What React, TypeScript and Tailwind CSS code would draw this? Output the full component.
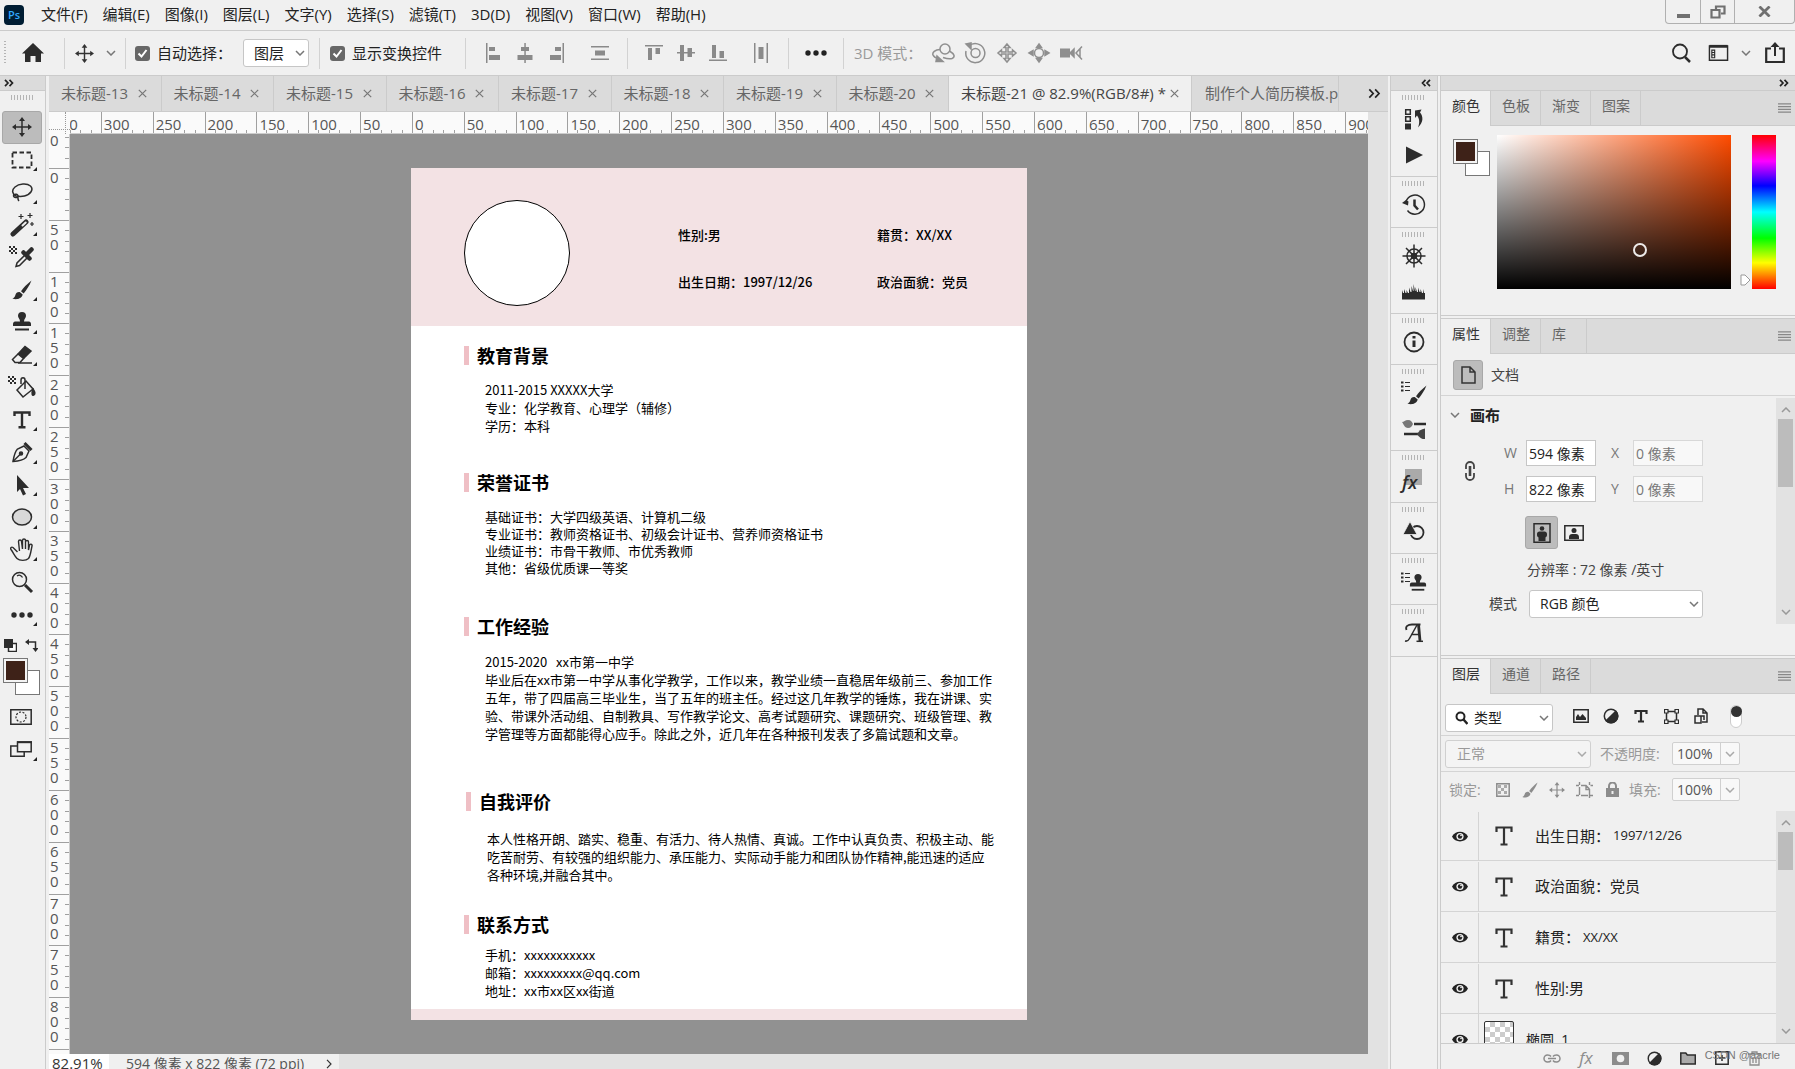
import React from "react";

type SvgProps = { w?: number; h?: number; vb?: string; children: React.ReactNode; className?: string };

function Svg({ w = 24, h = 24, vb = "0 0 24 24", children, className = "" }: SvgProps) {
  return (
    <svg width={w} height={h} viewBox={vb} fill="none" stroke="currentColor" strokeWidth={1.5} className={"shrink-0 " + className} aria-hidden="true">
      {children}
    </svg>
  );
}

const Chevron = ({ className = "" }: { className?: string }) => (
  <Svg w={10} h={6} vb="0 0 10 6" className={className}>
    <path d="M1 1l4 4 4-4" />
  </Svg>
);

const MoveIcon = ({ size = 20 }: { size?: number }) => (
  <Svg w={size} h={size} vb="0 0 20 20">
    <path d="M10 3v14M3 10h14" />
    <path d="M10 0l3 4H7zM10 20l3-4H7zM0 10l4-3v6zM20 10l-4-3v6z" fill="currentColor" stroke="none" />
  </Svg>
);

const Brush = ({ size = 20 }: { size?: number }) => (
  <Svg w={size} h={size} vb="0 0 20 20">
    <path d="M19.500 0.500C15 4 11.500 7.500 9 11.200l2.600 2.400C14.500 10 17.500 5.500 19.500 0.500z" fill="currentColor" stroke="none" />
    <path d="M8 12.200c-2.600-.4-4 .8-4.600 2.800-.5 1.800-1.300 2.900-3 3.600 3.600 1.400 9 .8 10.300-4z" fill="currentColor" stroke="none" />
  </Svg>
);

const Stamp = ({ size = 20 }: { size?: number }) => (
  <Svg w={size} h={size} vb="0 0 20 20">
    <path d="M10 0a4 4 0 0 1 4 4c0 2-2 2.600-2 5.500h5c1 0 2 1 2 2.500v2H1v-2c0-1.500 1-2.500 2-2.500h5C8 6.600 6 6 6 4a4 4 0 0 1 4-4z" fill="currentColor" stroke="none" />
    <path d="M3 17.500h14" strokeWidth={2} />
  </Svg>
);

const TextT = ({ size = 20 }: { size?: number }) => (
  <Svg w={size} h={size} vb="0 0 20 20">
    <path d="M2.500 6V2.500h15V6M10 3v14M6.500 17.300h7" strokeWidth={2.400} />
  </Svg>
);

const Contrast = ({ size = 16 }: { size?: number }) => (
  <Svg w={size} h={size} vb="0 0 16 16">
    <circle cx="8" cy="8" r="6.700" />
    <path d="M12.800 3.200a6.700 6.700 0 0 1-9.600 9.600z" fill="currentColor" />
  </Svg>
);

const Dots = () => (
  <Svg w={22} h={6} vb="0 0 22 6">
    <g fill="currentColor" stroke="none">
      <circle cx="3" cy="3" r="2.700" />
      <circle cx="11" cy="3" r="2.700" />
      <circle cx="19" cy="3" r="2.700" />
    </g>
  </Svg>
);

const Checker = () => (
  <g fill="currentColor" stroke="none">
    <path d="M0 1h2v2H0zM4 1h2v2H4zM2 3h2v2H2zM6 3h2v2H6zM0 5h2v2H0zM4 5h2v2H4zM2 7h2v2H2zM6 7h2v2H6z" />
  </g>
);

const tools: { name: string; icon: React.ReactNode; corner: boolean }[] = [
  { name: "移动工具", corner: false, icon: <MoveIcon /> },
  { name: "矩形选框工具", corner: true, icon: <Svg><path d="M2.500 4.500h19v15h-19z" strokeDasharray="4.500 2.500" strokeWidth={1.800} /></Svg> },
  { name: "套索工具", corner: true, icon: <Svg><path d="M6 16c-4-2-4.500-6-1-9 4-3.500 12-4 15.500-1 3.500 3.500 0 8.500-6 10-3 .7-6 .5-8.500 0z" /><path d="M8 16.500c.5-2.500-4-3-4.500-.8-.3 2 4.500 2.500 4.500.8 0 2-.5 3 1 4.500" /></Svg> },
  { name: "魔棒工具", corner: true, icon: <Svg><path d="M3 21L16 9" strokeWidth={5} strokeLinecap="round" /><path d="M12.500 12.500l3.200-3" stroke="#f0f0f0" strokeWidth={2} strokeLinecap="round" /><path d="M11 1v5M8.500 3.500h5M20 0v5M17.500 2.500h5M22 9v4M20 11h4" strokeWidth={1.200} /></Svg> },
  { name: "吸管工具", corner: false, icon: <Svg w={26} h={24} vb="0 0 26 24"><Checker /><path d="M7 21.500l1-3.500 9-9 2.500 2.500-9 9L7 21.500z" /><path d="M14.500 7.500l6 6M17 10l5.500-5.500" strokeWidth={4.500} strokeLinecap="round" /></Svg> },
  { name: "画笔工具", corner: true, icon: <Brush /> },
  { name: "仿制图章工具", corner: true, icon: <Stamp /> },
  { name: "橡皮擦工具", corner: true, icon: <Svg><path d="M2.500 16.500L8 11l5.500 4.500-3.500 4H5z" /><path d="M8.500 10.500L15 3.500l6 4.500-7 7z" fill="currentColor" /><path d="M8 20h14" /></Svg> },
  { name: "油漆桶工具", corner: false, icon: <Svg w={28} h={24} vb="0 0 28 24"><Checker /><path d="M9 15l9-9 7 8-10 8z" /><path d="M17 14V5c0-3-4-3-4 0v4" /><path d="M25 14c2 3 2.500 5 1 6s-3-1-1-6z" fill="currentColor" /></Svg> },
  { name: "文字工具", corner: true, icon: <TextT /> },
  { name: "钢笔工具", corner: true, icon: <Svg><path d="M3 21.500c1-6 2-10 4.500-12.500L14 6l5 5-3 6.500c-2.500 2.500-6.500 3.500-13 4z" /><path d="M3 21.500l7.500-7.500" /><circle cx="11" cy="13.500" r="1.500" fill="currentColor" /><path d="M14.500 3l7 7" strokeWidth={3} /></Svg> },
  { name: "路径选择工具", corner: true, icon: <Svg><path d="M7 2l12 13h-6l3 6-3 1.500-3-6.500-3 3z" fill="currentColor" stroke="none" /></Svg> },
  { name: "椭圆工具", corner: true, icon: <Svg><ellipse cx="12" cy="12" rx="9.500" ry="8" fill="#d9d9d9" /></Svg> },
  { name: "抓手工具", corner: true, icon: <Svg><path d="M7.500 14L3 9.500c-1.500-1-3 .5-2 2 2.500 3.500 4 7 6 9 2.500 2.500 9 2.500 11.500 0 2-2.500 2.500-8 3.500-12.500.5-2-2-2.500-2.500-.8L18.500 12V4c0-2-3-2-3 0v7V2.500c0-2-3-2-3 0V11L11.500 3.500c0-2-3-2-3 0L9.500 13" strokeWidth={1.400} /></Svg> },
  { name: "缩放工具", corner: false, icon: <Svg><circle cx="9.500" cy="9.500" r="7" /><path d="M7 6c2-1.500 4.500-.8 5.500 1.500" strokeWidth={1.200} /><path d="M15 15l7 7" strokeWidth={3} /></Svg> },
  { name: "编辑工具栏", corner: true, icon: <Dots /> },
];

const menus = ["文件(F)", "编辑(E)", "图像(I)", "图层(L)", "文字(Y)", "选择(S)", "滤镜(T)", "3D(D)", "视图(V)", "窗口(W)", "帮助(H)"];

function Grip() {
  return <div className="mx-auto h-[5px] w-6 shrink-0 bg-[repeating-linear-gradient(90deg,#b4b4b4_0px,#b4b4b4_1px,transparent_1px,transparent_3px)]" />;
}

function MenuBar() {
  return (
    <header className="flex h-[31px] shrink-0 items-start border-b border-[#cbcbcb]">
      <div className="mt-[5px] ml-1 flex h-5 w-5 shrink-0 items-center justify-center rounded bg-[#001d33] text-[11px] font-semibold text-[#31a8ff]">Ps</div>
      <nav className="ml-[17px] flex h-[29px] items-center gap-[15px] text-[15px] text-[#222]">
        {menus.map((m) => (
          <button key={m} type="button" className="whitespace-nowrap">{m}</button>
        ))}
      </nav>
      <div className="ml-auto flex h-[24px] w-[130px] shrink-0 rounded-b border border-t-0 border-[#b0b0b0] text-[#707070]">
        <button type="button" aria-label="最小化" className="flex w-[35px] items-center justify-center border-r border-[#b0b0b0]">
          <Svg w={13} h={14} vb="0 0 13 14"><path d="M0 11h13" strokeWidth={4} /></Svg>
        </button>
        <button type="button" aria-label="还原" className="flex w-[34px] items-center justify-center border-r border-[#b0b0b0]">
          <Svg w={16} h={14} vb="0 0 16 14"><path d="M6 4V1.500h8.500v7H11M1.500 5h8v7.500h-8z" strokeWidth={2.200} /></Svg>
        </button>
        <button type="button" aria-label="关闭" className="flex flex-1 items-center justify-center">
          <Svg w={13} h={11} vb="0 0 14 12"><path d="M1.500 0.500l11 11M12.500 0.500l-11 11" strokeWidth={3} /></Svg>
        </button>
      </div>
    </header>
  );
}

const Sep = ({ className = "" }: { className?: string }) => <div className={"h-[31px] w-px shrink-0 bg-[#d2d2d2] " + className} />;

function Check({ id, label, className = "" }: { id: string; label: string; className?: string }) {
  return (
    <div className={"flex shrink-0 items-center " + className}>
      <span className="relative flex h-[15px] w-[15px]">
        <input id={id} type="checkbox" defaultChecked className="h-[15px] w-[15px] appearance-none rounded-[3px] bg-[#676767]" />
        <Svg w={15} h={15} vb="0 0 15 15" className="pointer-events-none absolute inset-0 text-white"><path d="M3.500 7.500l3 3 5-6.500" strokeWidth={2} /></Svg>
      </span>
      <label htmlFor={id} className="ml-[7px] text-[15px] whitespace-nowrap text-[#222]">{label}</label>
    </div>
  );
}

function IconBtn({ name, className = "", children }: { name: string; className?: string; children: React.ReactNode }) {
  return (
    <button type="button" aria-label={name} className={"flex shrink-0 items-center justify-center " + className}>{children}</button>
  );
}

const hAlign = [
  { n: "左对齐", d: "M2 0h1.500v20H2zM5 4h6v4H5zM5 12h11v5H5z" },
  { n: "水平居中", d: "M8.300 0h1.500v20H8.300zM5 4h8v4H5zM1.500 12h15v5h-15z" },
  { n: "右对齐", d: "M14.500 0H16v20h-1.500zM7 4h6v4H7zM2 12h11v5H2z" },
];
const vAlign = [
  { n: "顶对齐", d: "M0 2h18v1.500H0zM3 5h4v12H3zM10.500 5h4.500v6h-4.500z" },
  { n: "垂直居中", d: "M0 9h18v1.500H0zM3 2h4v16H3zM10.500 5h4.500v9h-4.500z" },
  { n: "底对齐", d: "M0 16.500h18V18H0zM3 2h4v13H3zM10.500 8h4.500v7h-4.500z" },
];

const Shape = ({ d }: { d: string }) => (
  <Svg w={18} h={20} vb="0 0 18 20"><path d={d} fill="currentColor" stroke="none" /></Svg>
);

function OptionsBar() {
  return (
    <div className="flex h-[45px] shrink-0 items-center border-b border-[#cbcbcb] pr-[10px]">
      <div className="ml-1 h-6 w-0.5 shrink-0 bg-[repeating-linear-gradient(#b4b4b4_0px,#b4b4b4_1px,transparent_1px,transparent_3px)]" />
      <IconBtn name="主页" className="ml-4 w-[22px] text-[#2c2c2c]">
        <Svg w={22} h={20} vb="0 0 22 20"><path d="M11 0l11 10.500h-3V19h-5.500v-6h-5v6H3v-8.500H0z" fill="currentColor" stroke="none" /></Svg>
      </IconBtn>
      <Sep className="ml-5" />
      <IconBtn name="移动" className="ml-[10px] text-[#333]"><MoveIcon size={19} /></IconBtn>
      <Chevron className="ml-3 text-[#777]" />
      <Sep className="ml-[9px]" />
      <Check id="auto" label="自动选择：" className="ml-[9px] w-[108px]" />
      <div className="relative flex shrink-0 items-center">
        <select aria-label="自动选择对象" className="h-[28px] w-[66px] appearance-none rounded-[3px] border border-[#c6c6c6] bg-white pl-[10px] text-[15px] text-[#222]"><option>图层</option></select>
        <Chevron className="pointer-events-none absolute right-[4px] text-[#777]" />
      </div>
      <Sep className="ml-[10px]" />
      <Check id="transform" label="显示变换控件" className="ml-[10px] w-[125px]" />
      <Sep className="ml-[10px]" />
      <div className="ml-[18px] flex gap-[14px] text-[#8a8a8a]">
        {hAlign.map((a) => <IconBtn key={a.n} name={a.n}><Shape d={a.d} /></IconBtn>)}
      </div>
      <IconBtn name="水平分布" className="ml-[25px] text-[#8a8a8a]"><Shape d="M0 3h18v1.500H0zM4 7.500h10v5H4zM0 15.500h18V17H0z" /></IconBtn>
      <Sep className="ml-[18px]" />
      <div className="ml-[17px] flex gap-[14px] text-[#8a8a8a]">
        {vAlign.map((a) => <IconBtn key={a.n} name={a.n}><Shape d={a.d} /></IconBtn>)}
      </div>
      <IconBtn name="垂直分布" className="ml-[25px] text-[#8a8a8a]"><Shape d="M2 0h1.500v20H2zM6.500 4h5v12h-5zM14.500 0H16v20h-1.500z" /></IconBtn>
      <Sep className="ml-[18px]" />
      <IconBtn name="更多" className="ml-[16px] text-[#222]"><Dots /></IconBtn>
      <Sep className="ml-4" />
      <span className="ml-[10px] w-[77px] shrink-0 text-[15px] whitespace-nowrap text-[#9a9a9a]">3D 模式：</span>
      <div className="flex items-center gap-2 text-[#8f8f8f]">
        <IconBtn name="旋转 3D 对象"><Svg w={24} h={24}><circle cx="14" cy="8" r="5" /><path d="M9 8.500c-5 0-8 3-7 5.500s3 3 5 3.500M18.500 10c5 3 6 6 2.500 7.500-3 1-6 0-9-1" /><path d="M6 15l6 5.500H5z" fill="currentColor" /></Svg></IconBtn>
        <IconBtn name="滚动 3D 对象"><Svg w={24} h={24}><circle cx="12.500" cy="12" r="4.500" /><path d="M6 5a9.500 9.500 0 1 1-3 5" /><path d="M3 3l5-1 0 6z" fill="currentColor" /></Svg></IconBtn>
        <IconBtn name="拖动 3D 对象"><Svg w={24} h={24}><path d="M12 3l3 3.500h-2V11h4.500V9l3.500 3-3.500 3v-2H13v4.500h2L12 21l-3-3.500h2V13H6.500v2L3 12l3.500-3v2H11V6.500H9z" /></Svg></IconBtn>
        <IconBtn name="滑动 3D 对象"><Svg w={24} h={24}><circle cx="12" cy="12" r="4.500" /><path d="M12 3l2.500 3.500h-5zM12 21l2.500-3.500h-5zM2 12l4-2.500v5zM22 12l-4-2.500v5z" fill="currentColor" /></Svg></IconBtn>
        <IconBtn name="缩放 3D 对象"><Svg w={24} h={24}><path d="M1 7.500h10v9H1z" fill="currentColor" stroke="none" /><path d="M11 12l4-4v8z" fill="currentColor" /><path d="M23 5.500L17 12l6 6.500M21 8v8" /></Svg></IconBtn>
      </div>
      <div className="ml-auto flex shrink-0 items-center text-[#2c2c2c]">
        <IconBtn name="搜索"><Svg w={20} h={20} vb="0 0 20 20"><circle cx="9" cy="8.500" r="7" strokeWidth={1.800} /><path d="M14 14l5 5" strokeWidth={2.500} /></Svg></IconBtn>
        <IconBtn name="工作区" className="ml-[17px]"><Svg w={21} h={18} vb="0 0 22 18"><path d="M1.500 1.500h19v15h-19z" /><path d="M1.500 2h19" strokeWidth={3} /><path d="M4 6h3v8H4zM4 8.500h3M4 11h3" strokeWidth={1.200} /></Svg></IconBtn>
        <Chevron className="ml-3 text-[#777]" />
        <IconBtn name="共享" className="ml-[14px]"><Svg w={20} h={22} vb="0 0 20 22"><path d="M6 6.500H1.200V20h17.600V6.500H14" strokeWidth={2.200} /><path d="M10 14V4" strokeWidth={2} /><path d="M10 0l4.500 5h-9z" fill="currentColor" stroke="none" /></Svg></IconBtn>
      </div>
    </div>
  );
}

const DoubleArrow = ({ flip = false, big = false }: { flip?: boolean; big?: boolean }) => (
  <Svg w={big ? 13 : 10} h={big ? 11 : 8} vb="0 0 10 8" className={flip ? "rotate-180 text-[#222]" : "text-[#222]"}>
    <path d="M1 0.800L4 4 1 7.200M5.500 0.800L8.500 4l-3 3.200" strokeWidth={big ? 1.300 : 1.700} />
  </Svg>
);

function Swatches() {
  return (
    <div className="relative h-[37px] w-[37px] shrink-0">
      <div className="absolute right-0 bottom-0 h-[25px] w-[25px] border border-[#777] bg-white" />
      <div className="absolute top-0 left-0 h-[25px] w-[25px] border border-[#777] bg-[#3e2218] shadow-[inset_0_0_0_2px_#f4f4f4]" />
    </div>
  );
}

const Corner = () => <span className="absolute right-1 bottom-1 h-0 w-0 border-b-4 border-l-4 border-b-[#222] border-l-transparent" />;

function Toolbar() {
  return (
    <aside className="flex w-[46px] shrink-0 flex-col border-r border-[#cbcbcb]">
      <div className="flex h-[15px] shrink-0 items-center border-b border-[#cbcbcb] bg-[#dbdbdb] pl-1"><DoubleArrow /></div>
      <div className="h-5 shrink-0 pt-1"><Grip /></div>
      <div className="mr-[3px] ml-[2px] grid h-[520px] shrink-0 auto-rows-fr text-[#2c2c2c]">
        {tools.map((t, i) => (
          <button key={t.name} type="button" aria-label={t.name} className={"relative flex items-center justify-center rounded-[3px] border " + (i === 0 ? "border-[#a8a8a8] bg-[#bcbcbc]" : "border-transparent")}>
            {t.icon}
            {t.corner && <Corner />}
          </button>
        ))}
      </div>
      <div className="mt-2 flex shrink-0 items-center justify-between pr-[7px] pl-1 text-[#2c2c2c]">
        <Svg w={13} h={13} vb="0 0 13 13"><path d="M4.500 4.500h8v8h-8z" fill="#fff" /><path d="M0 0h9v9H0z" fill="currentColor" stroke="none" /></Svg>
        <Svg w={13} h={13} vb="0 0 13 13"><path d="M3 3h7.500v8" /><path d="M0 3l4-3v6zM10.500 13l3-4h-6z" fill="currentColor" stroke="none" /></Svg>
      </div>
      <div className="mt-[6px] ml-[3px]"><Swatches /></div>
      <div className="mr-[3px] mt-[6px] flex flex-col items-center text-[#2c2c2c]">
        <IconBtn name="快速蒙版" className="h-8"><Svg w={22} h={16} vb="0 0 22 16"><path d="M.8.8h20.400v14.400H.8z" /><circle cx="11" cy="8" r="5" strokeDasharray="2 1.500" strokeWidth={1.200} /></Svg></IconBtn>
        <button type="button" aria-label="屏幕模式" className="relative flex h-8 w-[40px] items-center justify-center">
          <Svg w={22} h={16} vb="0 0 22 16"><path d="M7 5H.8v10.200h13.400V11" /><path d="M7.500 1h13.700v9.700H7.500z" /><path d="M7 1.200h15" strokeWidth={2} /></Svg>
          <Corner />
        </button>
      </div>
    </aside>
  );
}

const docTabs = ["未标题-13", "未标题-14", "未标题-15", "未标题-16", "未标题-17", "未标题-18", "未标题-19", "未标题-20"];

const CloseX = ({ name }: { name: string }) => (
  <button type="button" aria-label={"关闭 " + name} className="shrink-0 text-[#777]">
    <Svg w={9} h={9} vb="0 0 9 9"><path d="M.8.8l7.400 7.400M8.200.8L.8 8.200" strokeWidth={1.200} /></Svg>
  </button>
);

function DocTabs() {
  return (
    <div className="flex h-[36px] shrink-0 border-b border-[#cbcbcb] bg-[#dbdbdb] text-[15px] text-[#666]">
      <div className="grid w-[900px] shrink-0 grid-cols-8">
        {docTabs.map((t) => (
          <div key={t} className="flex items-center gap-[10px] border-r border-[#cbcbcb] pl-3 whitespace-nowrap">
            <button type="button">{t}</button>
            <CloseX name={t} />
          </div>
        ))}
      </div>
      <div className="flex w-[243px] shrink-0 items-center justify-between border-r border-[#cbcbcb] bg-[#f0f0f0] px-3 whitespace-nowrap text-[#444]">
        <button type="button">未标题-21 @ 82.9%(RGB/8#) *</button>
        <CloseX name="未标题-21" />
      </div>
      <div className="flex min-w-0 flex-1 items-center border-r border-[#cbcbcb] pl-[13px]">
        <button type="button" className="overflow-hidden whitespace-nowrap">制作个人简历模板.psd</button>
      </div>
      <IconBtn name="更多文档" className="w-[49px] pl-[22px]"><DoubleArrow big /></IconBtn>
    </div>
  );
}

const hMarks = Array.from({ length: 26 }, (_, i) => Math.abs((i - 7) * 50));
const vMarks = Array.from({ length: 19 }, (_, i) => Math.abs((i - 1) * 50));

function HRuler() {
  return (
    <div className="h-[22px] min-w-0 flex-1 overflow-hidden border-b border-[#ccc] bg-[#fafafa]">
      <div className="-ml-[21px] grid h-full w-[1348px] grid-cols-[repeat(26,1fr)]">
        {hMarks.map((m, i) => (
          <div key={i} className="flex flex-col justify-between border-l border-[#a0a0a0] pl-0.5">
            <span className="h-[17px] text-[15px] leading-[24px] text-[#555]">{m}</span>
            <span className="-ml-[3px] h-[3px] bg-[repeating-linear-gradient(90deg,#a0a0a0_0px,#a0a0a0_1px,transparent_1px,transparent_20%)]" />
          </div>
        ))}
      </div>
    </div>
  );
}

function VRuler() {
  return (
    <div className="w-[21px] shrink-0 overflow-hidden border-r border-[#ccc] bg-[#fafafa]">
      <div className="-mt-[18px] grid h-[985px] grid-rows-[repeat(19,1fr)]">
        {vMarks.map((m, i) => (
          <div key={i} className="flex min-h-0 justify-between border-t border-[#a0a0a0]">
            <span className="flex flex-col pt-px pl-px text-[15px] leading-[15px] text-[#555]">
              {String(m).split("").map((c, k) => <span key={k}>{c}</span>)}
            </span>
            <span className="-mt-px w-1 bg-[repeating-linear-gradient(180deg,#a0a0a0_0px,#a0a0a0_1px,transparent_1px,transparent_20%)]" />
          </div>
        ))}
      </div>
    </div>
  );
}

function Section({ title, lines, className, bodyClass }: { title: string; lines: string[]; className: string; bodyClass: string }) {
  return (
    <section className={className}>
      <div className="flex h-[19px] items-center gap-2">
        <div className="h-full w-[5px] bg-[#efbfc5]" />
        <h2 className="text-lg leading-[19px] font-bold">{title}</h2>
      </div>
      <div className={"pl-[21px] text-[13px] whitespace-nowrap " + bodyClass}>
        {lines.map((l) => <p key={l} className="whitespace-pre">{l}</p>)}
      </div>
    </section>
  );
}

function Resume() {
  return (
    <article className="mx-auto mt-[34px] flex h-[852px] w-[616px] flex-col bg-white font-['Noto_Sans_CJK_SC',sans-serif] text-black">
      <div className="flex h-[158px] shrink-0 bg-[#f3e2e4] pl-[53px]">
        <div className="mt-8 h-[106px] w-[106px] rounded-full border border-black bg-white" />
        <div className="mt-[57px] ml-[108px] grid h-[67px] grid-cols-[199px_auto] content-between text-[13px] leading-5 font-medium">
          <span>性别:男</span>
          <span>籍贯：XX/XX</span>
          <span>出生日期：1997/12/26</span>
          <span>政治面貌：党员</span>
        </div>
      </div>
      <div className="flex-1 pl-[53px]">
        <Section title="教育背景" className="mt-[20px]" bodyClass="mt-4 leading-[18px]" lines={["2011-2015 XXXXX大学", "专业：化学教育、心理学（辅修）", "学历：本科"]} />
        <Section title="荣誉证书" className="mt-[38px]" bodyClass="mt-4 leading-[17px]" lines={["基础证书：大学四级英语、计算机二级", "专业证书：教师资格证书、初级会计证书、营养师资格证书", "业绩证书：市骨干教师、市优秀教师", "其他：省级优质课一等奖"]} />
        <Section
          title="工作经验"
          className="mt-[41px]"
          bodyClass="mt-[17px] leading-[18px]"
          lines={[
            "2015-2020   xx市第一中学",
            "毕业后在xx市第一中学从事化学教学，工作以来，教学业绩一直稳居年级前三、参加工作",
            "五年，带了四届高三毕业生，当了五年的班主任。经过这几年教学的锤炼，我在讲课、实",
            "验、带课外活动组、自制教具、写作教学论文、高考试题研究、课题研究、班级管理、教",
            "学管理等方面都能得心应手。除此之外，近几年在各种报刊发表了多篇试题和文章。",
          ]}
        />
        <Section
          title="自我评价"
          className="mt-[49px] ml-[2px]"
          bodyClass="mt-[19px] leading-[18px]"
          lines={[
            "本人性格开朗、踏实、稳重、有活力、待人热情、真诚。工作中认真负责、积极主动、能",
            "吃苦耐劳、有较强的组织能力、承压能力、实际动手能力和团队协作精神,能迅速的适应",
            "各种环境,并融合其中。",
          ]}
        />
        <Section title="联系方式" className="mt-[31px]" bodyClass="mt-3 leading-[18px]" lines={["手机：xxxxxxxxxxx", "邮箱：xxxxxxxxx@qq.com", "地址：xx市xx区xx街道"]} />
      </div>
      <div className="h-[11px] shrink-0 bg-[#f3e2e4]" />
    </article>
  );
}

function Workspace() {
  return (
    <main className="ml-[3px] flex min-w-0 flex-1 flex-col">
      <DocTabs />
      <div className="flex min-h-0 flex-1">
        <div className="flex min-w-0 flex-1 flex-col">
          <div className="flex shrink-0">
            <div className="relative h-[22px] w-[21px] shrink-0 bg-[#fafafa]">
              <div className="absolute inset-x-0 bottom-1 border-t border-dotted border-[#999]" />
              <div className="absolute inset-y-0 right-1 border-l border-dotted border-[#999]" />
            </div>
            <HRuler />
          </div>
          <div className="flex min-h-0 flex-1">
            <VRuler />
            <div className="min-w-0 flex-1 overflow-hidden bg-[#919191]"><Resume /></div>
          </div>
        </div>
        <div className="w-5 shrink-0 bg-[#e2e2e2]" />
      </div>
      <footer className="flex h-[15px] shrink-0 bg-[#e2e2e2] text-[15px] leading-[19px] text-[#333]">
        <input aria-label="缩放比例" defaultValue="82.91%" className="h-[19px] w-[60px] bg-white pl-[3px]" />
        <div className="flex w-[230px] items-start bg-[#f0f0f0] pl-[17px] whitespace-nowrap">
          <span className="w-[200px] text-[14px] text-[#555]">594 像素 x 822 像素 (72 ppi)</span>
          <Svg w={6} h={10} vb="0 0 6 10" className="mt-[5px]"><path d="M1 .8L5 5 1 9.200" strokeWidth={1.200} /></Svg>
        </div>
      </footer>
    </main>
  );
}

function ListLines() {
  return (
    <Svg w={10} h={12} vb="0 0 10 12"><path d="M0 1.500h2.500M0 5.500h2.500M0 9.500h2.500" strokeWidth={2.200} /><path d="M4 1.500h5M4 5.500h5M4 9.500h5" strokeWidth={1.200} /></Svg>
  );
}

const dockGroups: { h: string; items: { n: string; icon: React.ReactNode }[] }[] = [
  {
    h: "h-[86px]",
    items: [
      { n: "历史记录画板", icon: <Svg w={20} h={22} vb="0 0 20 22"><path d="M1.700 1.700h4.600v4.600H1.700zM1.700 8.700h4.600v4.600H1.700z" /><path d="M1 15.500h6V21.500H1z" fill="currentColor" stroke="none" /><path d="M11 2.500l6.500-1-1.500 3c3.500 4 3.500 10-2 15 2-5 1.500-9-1-12L11 10z" fill="currentColor" stroke="none" /></Svg> },
      { n: "动作", icon: <Svg w={18} h={18} vb="0 0 18 18"><path d="M1 0.500l17 8.500-17 8.500z" fill="currentColor" stroke="none" /></Svg> },
    ],
  },
  { h: "h-[51px]", items: [{ n: "历史记录", icon: <Svg><path d="M4 8.500a9.500 9.500 0 1 1 1.500 9" strokeWidth={1.500} /><path d="M0 10l4-3 2.500 1.500-.500 4z" fill="currentColor" stroke="none" /><path d="M12.500 6.500v6l3.500 4" strokeWidth={2.500} /></Svg> }] },
  {
    h: "h-[86px]",
    items: [
      { n: "导航器", icon: <Svg><circle cx="12" cy="12" r="7" /><circle cx="12" cy="12" r="2.500" fill="currentColor" /><path d="M12 .5v23M.5 12h23M4 4l16 16M20 4L4 20" /></Svg> },
      { n: "直方图", icon: <Svg w={24} h={16} vb="0 0 24 16"><path d="M0 15.500V6l1 3h1V5l1.500 4h1V6l1.500 3h1V3.500L8.500 8h1V2l1.500 5h.5V0l1.500 7h.5V3l1.500 5h1V3.500L17.500 8h1V5l1.500 4h1V5l1 4h1V6v9.500z" fill="currentColor" stroke="none" /></Svg> },
    ],
  },
  { h: "h-[51px]", items: [{ n: "信息", icon: <Svg><circle cx="12" cy="12" r="9.500" strokeWidth={1.800} /><path d="M12 10.500V17" strokeWidth={3} /><path d="M12 6v2.500" strokeWidth={3} /></Svg> }] },
  {
    h: "h-[86px]",
    items: [
      { n: "画笔设置", icon: <div className="flex items-start"><ListLines /><div className="-ml-1 pt-1"><Brush size={20} /></div></div> },
      { n: "画笔", icon: <Svg w={26} h={20} vb="0 0 26 20"><path d="M13 5h12M3 15h14" strokeWidth={2.500} /><path d="M1 3c2 0 3-2 6-2s4 2 5 4c-1 2-2 4-5 4S3 6 1 3z" fill="#777" stroke="none" /><path d="M16 15c2-3 4-5 8-5.500v11c-4-.5-6-2.500-8-5.500z" fill="#444" stroke="none" /></Svg> },
    ],
  },
  {
    h: "h-[52px]",
    items: [{ n: "样式", icon: <span className="relative flex h-[26px] w-6 items-end"><span className="absolute top-[3px] right-1 h-4 w-[17px] bg-[#aaa]" /><span className="relative font-['Open_Sans'] text-[18px] leading-5 font-semibold italic">fx</span></span> }],
  },
  { h: "h-[51px]", items: [{ n: "形状", icon: <Svg w={22} h={20} vb="0 0 22 20"><circle cx="14" cy="11.500" r="6.500" strokeWidth={1.800} /><path d="M7 .5l7 13H0z" fill="currentColor" stroke="#f0f0f0" strokeWidth={0.800} /></Svg> }] },
  { h: "h-[51px]", items: [{ n: "仿制源", icon: <div className="flex items-start"><ListLines /><div className="-ml-0.5 pt-0.5"><Stamp size={18} /></div></div> }] },
  { h: "h-[52px]", items: [{ n: "字形", icon: <Svg w={20} h={20} vb="0 0 20 20"><path d="M2.500 7C1 3.500 4 1.500 8 1.500h8.500" strokeWidth={1.800} /><path d="M14.500 1.500L16 18" strokeWidth={2.800} /><path d="M13 2L5.500 15.500C4.500 17.500 3 18.500 1 18M7 11.500h8" /><path d="M12.500 18.300H19" /></Svg> }] },
];

function Dock() {
  return (
    <aside className="ml-[2px] flex w-[48px] shrink-0 flex-col border-x border-[#cbcbcb]">
      <div className="flex h-[15px] shrink-0 items-center justify-end border-b border-[#cbcbcb] bg-[#dbdbdb] pr-[6px]"><DoubleArrow flip /></div>
      {dockGroups.map((g) => (
        <div key={g.items[0].n} className={"flex shrink-0 flex-col border-b border-[#cbcbcb] pt-1 " + g.h}>
          <Grip />
          <div className="flex flex-col pt-px">
            {g.items.map((it) => (
              <IconBtn key={it.n} name={it.n} className="h-9 text-[#2c2c2c]">{it.icon}</IconBtn>
            ))}
          </div>
        </div>
      ))}
    </aside>
  );
}

function PanelTabs({ tabs }: { tabs: string[] }) {
  return (
    <div className="flex h-[35px] shrink-0 bg-[#dbdbdb] text-sm text-[#666]">
      {tabs.map((t, i) => (
        <button key={t} type="button" className={"border-r border-[#cbcbcb] pb-[5px] pl-[11px] text-left " + (t.length === 1 ? "w-[46px] " : "w-[50px] ") + (i === 0 ? "bg-[#f0f0f0] text-[#333]" : "border-b")}>{t}</button>
      ))}
      <div className="flex flex-1 items-center justify-end border-b border-[#cbcbcb] pr-1 text-[#888]">
        <IconBtn name="面板菜单"><Svg w={13} h={10} vb="0 0 13 10"><path d="M0 .8h13M0 3.600h13M0 6.400h13M0 9.200h13" strokeWidth={1.200} /></Svg></IconBtn>
      </div>
    </div>
  );
}

function ColorPanel() {
  return (
    <section className="flex h-[225px] shrink-0 flex-col border-b border-[#cbcbcb]">
      <PanelTabs tabs={["颜色", "色板", "渐变", "图案"]} />
      <div className="flex pt-[9px] pl-3">
        <div className="pt-1"><Swatches /></div>
        <div className="relative ml-[7px] h-[154px] w-[234px] bg-[linear-gradient(to_top,#000,transparent),linear-gradient(to_right,#fff,#ff4b00)]">
          <div className="absolute top-[108px] left-[136px] h-[14px] w-[14px] rounded-full border-2 border-white/90" />
        </div>
        <Svg w={11} h={12} vb="0 0 11 12" className="mt-[139px] ml-[9px] text-[#999]"><path d="M1 1h4l5 5-5 5H1z" fill="#fff" strokeLinejoin="round" strokeWidth={1} /></Svg>
        <div className="ml-px h-[154px] w-6 bg-[linear-gradient(to_bottom,#f00,#f0f_17%,#00f_33%,#0ff_50%,#0f0_67%,#ff0_83%,#f00)]" />
      </div>
    </section>
  );
}

function Scroll({ thumb }: { thumb: string }) {
  return (
    <div className="flex w-[19px] shrink-0 flex-col items-center justify-between bg-[#e2e2e2] py-[9px] text-[#999]">
      <div className="flex w-full flex-col items-center">
        <Chevron className="rotate-180" />
        <div className={"mt-[6px] w-[15px] bg-[#bcbcbc] " + thumb} />
      </div>
      <Chevron />
    </div>
  );
}

function Field({ id, label, value, off = false }: { id: string; label: string; value: string; off?: boolean }) {
  return (
    <div className="flex items-center text-sm">
      <label htmlFor={id} className="w-[22px] text-[#777]">{label}</label>
      <input id={id} disabled={off} defaultValue={value} className={"h-[26px] w-[70px] border px-[2px] " + (off ? "border-[#d8d8d8] bg-[#f8f8f8] text-[#777]" : "border-[#c6c6c6] bg-white text-[#222]")} />
    </div>
  );
}

function PropertiesPanel() {
  return (
    <section className="mt-[2px] flex h-[338px] shrink-0 flex-col border-y border-[#cbcbcb]">
      <PanelTabs tabs={["属性", "调整", "库"]} />
      <div className="flex h-[42px] shrink-0 items-center border-b border-[#d4d4d4] pl-3">
        <div className="flex h-[30px] w-[30px] items-center justify-center rounded-[3px] border border-[#a8a8a8] bg-[#bcbcbc] text-[#333]">
          <Svg w={15} h={18} vb="0 0 15 18"><path d="M1 1h8l5 5v11H1zM9 1v5h5" /></Svg>
        </div>
        <span className="ml-2 text-sm text-[#444]">文档</span>
      </div>
      <div className="flex min-h-0 flex-1 pt-[2px] pb-[31px]">
        <div className="flex-1 pt-[7px] pl-[9px]">
          <button type="button" className="flex items-center text-[15px] leading-5 font-bold text-[#222]">
            <Chevron className="mr-[10px] text-[#777]" />画布
          </button>
          <div className="mt-[15px] flex items-center pl-[14px]">
            <Svg w={12} h={20} vb="0 0 12 20" className="text-[#444]"><path d="M2 8V5a4 4 0 0 1 8 0v3M2 12v3a4 4 0 0 0 8 0v-3" strokeWidth={1.800} /><path d="M6 5v10" strokeWidth={2.600} /></Svg>
            <div className="ml-[28px] grid grid-cols-[107px_auto] gap-y-[10px]">
              <Field id="pw" label="W" value="594 像素" />
              <Field id="px" label="X" value="0 像素" off />
              <Field id="ph" label="H" value="822 像素" />
              <Field id="py" label="Y" value="0 像素" off />
            </div>
          </div>
          <div className="mt-[14px] flex items-center gap-[6px] pl-[75px] text-[#2c2c2c]">
            <IconBtn name="纵向" className="h-[33px] w-[33px] rounded-[3px] border border-[#a8a8a8] bg-[#bcbcbc]">
              <Svg w={18} h={20} vb="0 0 18 20"><path d="M1 .8h16v18.400H1z" /><circle cx="9" cy="5.500" r="2.300" fill="currentColor" stroke="none" /><path d="M4 12v-1c0-1.500 1-2.500 2.500-2.500h5c1.500 0 2.500 1 2.500 2.500v1c0 1.500-1 2-1.500 2.500V18h-7v-3.500C5 14 4 13.500 4 12z" fill="currentColor" stroke="none" /></Svg>
            </IconBtn>
            <IconBtn name="横向"><Svg w={20} h={16} vb="0 0 20 16"><path d="M.8.8h18.400v14.400H.8z" /><circle cx="10" cy="5.500" r="2.500" fill="currentColor" stroke="none" /><path d="M5 14v-2c0-2 1.500-3 3-3h4c1.500 0 3 1 3 3v2z" fill="currentColor" stroke="none" /></Svg></IconBtn>
          </div>
          <p className="mt-[11px] pl-[77px] text-sm leading-5 text-[#444]">分辨率 : 72 像素 /英寸</p>
          <div className="mt-[10px] flex items-center pl-[39px] text-sm text-[#444]">
            <label htmlFor="mode" className="w-10">模式</label>
            <div className="relative flex items-center">
              <select id="mode" className="h-[28px] w-[174px] appearance-none rounded-[3px] border border-[#c6c6c6] bg-white pl-[10px] text-[#222]"><option>RGB 颜色</option></select>
              <Chevron className="pointer-events-none absolute right-1 text-[#777]" />
            </div>
          </div>
        </div>
        <Scroll thumb="h-[68px]" />
      </div>
    </section>
  );
}

function Percent({ id, label }: { id: string; label: string }) {
  return (
    <>
      <label htmlFor={id} className="shrink-0 text-sm whitespace-nowrap text-[#999]">{label}</label>
      <div className="ml-auto flex h-[23px] w-[68px] shrink-0 rounded-[2px] border border-[#d0d0d0] bg-[#f8f8f8]">
        <input id={id} defaultValue="100%" className="w-[48px] min-w-0 border-r border-[#d0d0d0] pl-1 text-sm text-[#555]" />
        <span className="flex flex-1 items-center justify-center text-[#aaa]"><Chevron /></span>
      </div>
    </>
  );
}

const layers = [
  { cjk: "出生日期：", latin: "1997/12/26" },
  { cjk: "政治面貌：党员", latin: "" },
  { cjk: "籍贯：", latin: "XX/XX" },
  { cjk: "性别:男", latin: "" },
];

const Eye = () => (
  <Svg w={16} h={11} vb="0 0 16 11"><path d="M0 5.500C3-1 13-1 16 5.500 13 12 3 12 0 5.500z" fill="currentColor" stroke="none" /><circle cx="8" cy="5.500" r="3.600" fill="#f0f0f0" stroke="none" /><circle cx="8" cy="5.500" r="2.200" fill="currentColor" stroke="none" /><circle cx="9" cy="4.500" r="0.800" fill="#fff" stroke="none" /></Svg>
);

const BigT = () => (
  <Svg w={18} h={20} vb="0 0 18 20"><path d="M1.500 6V1.500h15V6M9 2v16.500M5.500 18.500h7" strokeWidth={2.200} /></Svg>
);

function LayersPanel() {
  return (
    <section className="mt-[2px] flex min-h-0 flex-1 flex-col border-t border-[#cbcbcb]">
      <PanelTabs tabs={["图层", "通道", "路径"]} />
      <div className="flex h-[42px] shrink-0 items-center border-b border-[#d4d4d4] pt-[6px] pl-1">
        <div className="relative flex items-center">
          <select aria-label="图层过滤" className="h-[28px] w-[108px] appearance-none rounded-[3px] border border-[#c6c6c6] bg-white pl-[28px] text-sm text-[#222]"><option>类型</option></select>
          <Svg w={13} h={14} vb="0 0 13 14" className="pointer-events-none absolute left-[10px] text-[#222]"><circle cx="5.500" cy="5.500" r="4" strokeWidth={2} /><path d="M8.500 8.500l4 4.500" strokeWidth={2.500} /></Svg>
          <Chevron className="pointer-events-none absolute right-1 text-[#777]" />
        </div>
        <div className="-mt-[3px] ml-5 flex items-center gap-[14px] text-[#2c2c2c]">
          <IconBtn name="像素图层" className="w-4"><Svg w={16} h={14} vb="0 0 16 14"><path d="M.8.800h14.400v12.400H.8z" /><path d="M3 11V8l2-3 2 3 2.500-3L13 9v2z" fill="currentColor" stroke="none" /></Svg></IconBtn>
          <IconBtn name="调整图层" className="w-4"><Contrast /></IconBtn>
          <IconBtn name="文字图层" className="w-4"><Svg w={14} h={14} vb="0 0 14 14"><path d="M1.500 5V2h11v3M7 2v10M4 12.500h6" strokeWidth={2.200} /></Svg></IconBtn>
          <IconBtn name="形状图层" className="w-4"><Svg w={15} h={15} vb="0 0 15 15"><path d="M2.500 2.500h10v10h-10z" /><path d="M0.500 0.500h3.500v3.500H0.500zM11 .5h3.500v3.500H11zM.5 11h3.500v3.500H.5zM11 11h3.500v3.500H11z" fill="#f0f0f0" strokeWidth={1.200} /></Svg></IconBtn>
          <IconBtn name="智能对象" className="w-4"><Svg w={14} h={16} vb="0 0 14 16"><path d="M4 7V1h5l4 4v9H8M9 1v4h4" /><path d="M1 8h6v7H1zM7 8h3v4" /></Svg></IconBtn>
          <button type="button" aria-label="过滤开关" className="ml-[7px] flex h-[23px] w-3 justify-center rounded-full border border-[#ccc] bg-white">
            <span className="h-[11px] w-[11px] shrink-0 rounded-full bg-[#333]" />
          </button>
        </div>
      </div>
      <div className="flex h-[36px] shrink-0 items-center border-b border-[#d4d4d4] pr-[55px] pl-1">
        <div className="relative mr-[9px] flex items-center">
          <select aria-label="混合模式" className="h-[28px] w-[146px] appearance-none rounded-[3px] border border-[#d0d0d0] bg-[#f4f4f4] pl-[11px] text-sm text-[#999]"><option>正常</option></select>
          <Chevron className="pointer-events-none absolute right-1 text-[#aaa]" />
        </div>
        <Percent id="opacity" label="不透明度:" />
      </div>
      <div className="flex h-[35px] shrink-0 items-center pr-[55px] pl-2 text-[#8c8c8c]">
        <span className="w-[46px] shrink-0 text-sm text-[#999]">锁定:</span>
        <div className="mr-[9px] flex items-center gap-[11px]">
          <IconBtn name="锁定透明像素" className="w-4"><Svg w={14} h={14} vb="0 0 14 14"><path d="M.8.800h12.400v12.400H.8z" /><path d="M2 2h3v3H2zM8 2h3v3H8zM5 5h3v3H5zM2 8h3v3H2zM8 8h3v3H8z" fill="currentColor" stroke="none" opacity=".7" /></Svg></IconBtn>
          <IconBtn name="锁定图像像素" className="w-4"><Brush size={16} /></IconBtn>
          <IconBtn name="锁定位置" className="w-4"><MoveIcon size={16} /></IconBtn>
          <IconBtn name="锁定画板" className="w-[17px]"><Svg w={17} h={16} vb="0 0 17 16"><path d="M3.500 0v3M3.500 5v8M5 13.500h7M14 13.500h3M13.500 0v3M13.500 7v9M0 3.500h3M5 3.500h5l3.500 3.500M10 3.500v4h3.500M14.500 3.500H17M0 13.500h3" strokeWidth={1.400} /></Svg></IconBtn>
          <IconBtn name="全部锁定" className="w-4"><Svg w={13} h={15} vb="0 0 13 15"><path d="M0 6h13v9H0z" fill="currentColor" stroke="none" /><path d="M3 7V4a3.500 3.500 0 0 1 7 0v3" strokeWidth={2} /><path d="M6.500 9v3" stroke="#f0f0f0" strokeWidth={2} /></Svg></IconBtn>
        </div>
        <Percent id="fill" label="填充:" />
      </div>
      <div className="mt-1 flex min-h-0 flex-1">
        <ul className="min-w-0 flex-1 overflow-hidden text-[15px] text-[#222]">
          {layers.map((l, i) => (
            <li key={l.cjk} className={"flex items-center border-b border-[#d4d4d4] pt-px " + (i === 0 ? "h-[50px]" : "h-[51px]")}>
              <button type="button" aria-label="显示或隐藏" className="flex h-full w-[38px] shrink-0 items-center justify-center border-r border-[#d4d4d4]"><Eye /></button>
              <span className="flex w-[56px] shrink-0 pl-4 text-[#333]"><BigT /></span>
              <span className="flex items-center whitespace-nowrap">{l.cjk}{l.latin && <span className="ml-[3px] text-[13px]">{l.latin}</span>}</span>
            </li>
          ))}
          <li className="flex h-[51px] items-center">
            <button type="button" aria-label="显示或隐藏" className="flex h-full w-[38px] shrink-0 items-center justify-center border-r border-[#d4d4d4]"><Eye /></button>
            <span className="ml-[5px] h-[38px] w-[30px] rounded-[2px] border border-[#333] bg-[repeating-conic-gradient(#ccc_0%_25%,#fff_0%_50%)] bg-[length:10px_10px]" />
            <span className="ml-3 text-sm whitespace-nowrap">椭圆&nbsp; 1</span>
          </li>
        </ul>
        <Scroll thumb="h-[38px]" />
      </div>
      <div className="relative flex h-[26px] shrink-0 items-center justify-end gap-[16px] border-t border-[#cbcbcb] pt-[3px] pr-[34px] text-[#8c8c8c]">
        <IconBtn name="链接图层" className="w-[18px]"><Svg w={18} h={9} vb="0 0 18 9"><path d="M8 6.500C7 8 6 8 4.500 8a3.500 3.500 0 0 1 0-7C6 1 7 1 8 2.500M10 2.500C11 1 12 1 13.500 1a3.500 3.500 0 0 1 0 7C12 8 11 8 10 6.500M5 4.500h8" /></Svg></IconBtn>
        <IconBtn name="图层样式" className="w-[18px] font-['Open_Sans'] text-[17px] leading-4 italic">fx</IconBtn>
        <IconBtn name="添加蒙版" className="w-[18px]"><Svg w={17} h={13} vb="0 0 17 13"><path d="M0 0h17v13H0z" fill="currentColor" stroke="none" /><circle cx="8.500" cy="6.500" r="3.800" fill="#f0f0f0" stroke="none" /></Svg></IconBtn>
        <IconBtn name="新建调整图层" className="w-[18px] text-[#2c2c2c]"><Contrast size={15} /></IconBtn>
        <IconBtn name="新建组" className="w-[18px] text-[#2c2c2c]"><Svg w={16} h={13} vb="0 0 16 13"><path d="M.8 12V1h5l1.500 2h8v9z" fill="#aaa" /></Svg></IconBtn>
        <IconBtn name="新建图层" className="w-[18px] text-[#2c2c2c]"><Svg w={14} h={14} vb="0 0 14 14"><path d="M.8.800h12.400v12.400H.8zM7 4v6M4 7h6" /></Svg></IconBtn>
        <IconBtn name="删除图层" className="w-[14px]"><Svg w={13} h={15} vb="0 0 13 15"><path d="M0 3h13M4 3V1h5v2M2 3v11h9V3M5 6v6M8 6v6" strokeWidth={1.300} /></Svg></IconBtn>
        <span className="pointer-events-none absolute top-[5px] right-[15px] font-['Liberation_Sans'] text-[11px] leading-3 text-[#777]">CSDN @aacrle</span>
      </div>
    </section>
  );
}

export default function App() {
  return (
    <div className="flex h-screen w-full flex-col overflow-hidden bg-[#f0f0f0] font-['Open_Sans','Noto_Sans_CJK_SC',sans-serif]" lang="zh-CN">
      <MenuBar />
      <OptionsBar />
      <div className="flex min-h-0 flex-1">
        <Toolbar />
        <Workspace />
        <Dock />
        <div className="ml-[2px] flex w-[355px] shrink-0 flex-col border-l border-[#cbcbcb]">
          <div className="flex h-[15px] shrink-0 items-center justify-end border-b border-[#cbcbcb] bg-[#dbdbdb] pr-[6px]"><DoubleArrow /></div>
          <ColorPanel />
          <PropertiesPanel />
          <LayersPanel />
        </div>
      </div>
    </div>
  );
}
